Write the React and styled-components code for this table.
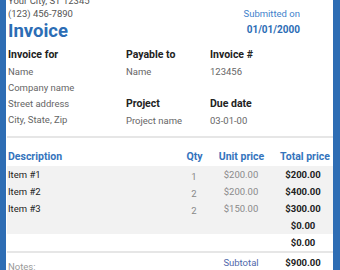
import React from "react";
import styled, { createGlobalStyle } from "styled-components";

const GlobalStyle = createGlobalStyle`
  html, body {
    margin: 0;
    padding: 0;
    background: #fff;
  }
  body {
    font-family: Roboto, "Liberation Sans", sans-serif;
    overflow: hidden;
  }
`;

const items = [
  { name: "Item #1", qty: 1, unit: "$200.00", total: "$200.00" },
  { name: "Item #2", qty: 2, unit: "$200.00", total: "$400.00" },
  { name: "Item #3", qty: 2, unit: "$150.00", total: "$300.00" },
  { name: "", qty: "", unit: "", total: "$0.00" },
  { name: "", qty: "", unit: "", total: "$0.00", plain: true }
];

const App = () => {
  return (
    <>
      <GlobalStyle />
      <Sheet>
        <Paper>
          <Header>
            <Sender>
              <AddressLine>Your City, ST 12345</AddressLine>
              <AddressLine>(123) 456-7890</AddressLine>
              <Title>Invoice</Title>
            </Sender>
            <Submitted>
              <SubmittedLabel>Submitted on</SubmittedLabel>
              <SubmittedDate>01/01/2000</SubmittedDate>
            </Submitted>
          </Header>

          <InfoGrid>
            <InfoColumn>
              <Label>Invoice for</Label>
              <Value>Name</Value>
              <Value>Company name</Value>
              <Value>Street address</Value>
              <Value>City, State, Zip</Value>
            </InfoColumn>
            <InfoColumn>
              <Label>Payable to</Label>
              <Value>Name</Value>
              <Value />
              <Label>Project</Label>
              <Value>Project name</Value>
            </InfoColumn>
            <InfoColumn>
              <Label>Invoice #</Label>
              <Value>123456</Value>
              <Value />
              <Label>Due date</Label>
              <Value>03-01-00</Value>
            </InfoColumn>
          </InfoGrid>

          <Divider />

          <Table>
            <HeadRow>
              <HeadCell>Description</HeadCell>
              <HeadCell $align="center">Qty</HeadCell>
              <HeadCell $align="center">Unit price</HeadCell>
              <HeadCell $align="center" $shift={8}>
                Total price
              </HeadCell>
            </HeadRow>
            {items.map((item, i) => (
              <ItemRow key={i} $plain={item.plain}>
                <DescCell>{item.name}</DescCell>
                <QtyCell>{item.qty}</QtyCell>
                <UnitCell>{item.unit}</UnitCell>
                <TotalCell>{item.total}</TotalCell>
              </ItemRow>
            ))}
          </Table>

          <Divider $gap={0} />

          <Footer>
            <Notes>Notes:</Notes>
            <span />
            <SubtotalLabel>Subtotal</SubtotalLabel>
            <TotalCell>$900.00</TotalCell>
          </Footer>
        </Paper>
      </Sheet>
    </>
  );
};

const Sheet = styled.div`
  width: 340px;
  height: 270px;
  box-sizing: border-box;
  border-left: 6px solid #2e6db4;
  border-right: 7px solid #2e6db4;
  padding-left: 1px;
  overflow: hidden;
`;

const Paper = styled.div`
  margin-top: -5px;
  display: flex;
  flex-direction: column;
`;

const Header = styled.div`
  display: flex;
  justify-content: space-between;
  padding-left: 1px;
  padding-right: 33px;
`;

const Sender = styled.div`
  display: flex;
  flex-direction: column;
`;

const AddressLine = styled.div`
  font-size: 9.5px;
  line-height: 12.5px;
  color: #555;
`;

const Title = styled.div`
  font-size: 18.5px;
  line-height: 22px;
  font-weight: 700;
  color: #2c6db5;
`;

const Submitted = styled.div`
  display: flex;
  flex-direction: column;
  align-items: flex-end;
  padding-top: 12.5px;
`;

const SubmittedLabel = styled.div`
  font-size: 9.5px;
  line-height: 12.5px;
  color: #3f82cc;
`;

const SubmittedDate = styled.div`
  margin-top: 1.5px;
  font-size: 10px;
  line-height: 16px;
  font-weight: 700;
  color: #2c6db5;
`;

const InfoGrid = styled.div`
  display: grid;
  grid-template-columns: 118px 84px 1fr;
  margin-top: 5px;
  padding-left: 1px;
`;

const InfoColumn = styled.div`
  display: flex;
  flex-direction: column;
`;

const Label = styled.div`
  height: 16px;
  margin-bottom: 1px;
  font-size: 10.5px;
  line-height: 16px;
  font-weight: 700;
  color: #222;
`;

const Value = styled.div`
  height: 16px;
  font-size: 9.5px;
  line-height: 16px;
  color: #666;
`;

const Divider = styled.div`
  height: 2px;
  margin-top: ${(p) => (p.$gap ?? 6.5)}px;
  background: #e6e6e6;
`;

const Table = styled.div`
  display: flex;
  flex-direction: column;
  margin-top: 8.5px;
`;

const columns = "167px 40px 54px 1fr";

const HeadRow = styled.div`
  display: grid;
  grid-template-columns: ${columns};
  height: 20px;
  align-items: center;
`;

const HeadCell = styled.div`
  padding-left: ${(p) => 1 + (p.$shift || 0)}px;
  text-align: ${(p) => p.$align || "left"};
  font-size: 10.5px;
  font-weight: 700;
  color: #3574bd;
  white-space: nowrap;
`;

const ItemRow = styled.div`
  display: grid;
  grid-template-columns: ${columns};
  height: 17px;
  align-items: center;
  background: ${(p) => (p.$plain ? "#fff" : "#f2f2f2")};
`;

const DescCell = styled.div`
  padding-left: 1px;
  font-size: 9.5px;
  color: #222;
`;

const QtyCell = styled.div`
  padding-top: 4px;
  text-align: center;
  font-size: 9.5px;
  color: #888;
`;

const UnitCell = styled.div`
  text-align: center;
  font-size: 9.5px;
  color: #8a8a8a;
`;

const TotalCell = styled.div`
  padding-left: 5px;
  text-align: center;
  font-size: 9.5px;
  font-weight: 700;
  color: #222;
`;

const Footer = styled.div`
  display: grid;
  grid-template-columns: ${columns};
  height: 19px;
  align-items: center;
`;

const Notes = styled.div`
  padding-left: 1px;
  padding-top: 8px;
  font-size: 9.5px;
  color: #999;
`;

const SubtotalLabel = styled.div`
  text-align: center;
  font-size: 9.5px;
  color: #4f68ab;
`;

export default App;
